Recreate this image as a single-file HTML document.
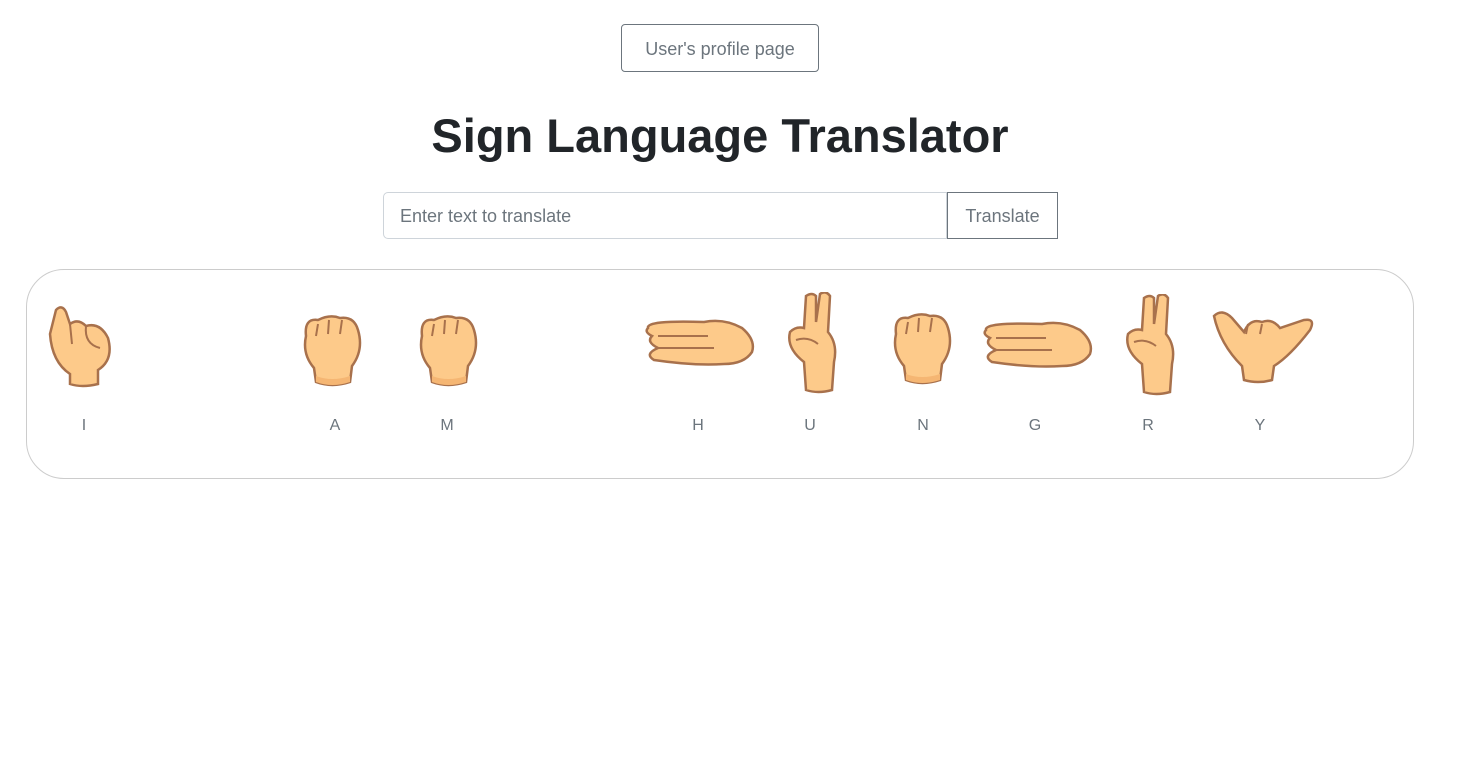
<!DOCTYPE html>
<html><head><meta charset="utf-8"><style>
body{margin:0;background:#fff;font-family:"Liberation Sans",sans-serif;width:1472px;height:778px;position:relative;overflow:hidden}
.btn{position:absolute;left:621px;top:24px;width:196px;height:46px;border:1px solid #6c757d;border-radius:4px;color:#6c757d;font-size:18px;line-height:48px;text-align:center}
h1{position:absolute;left:0;width:1440px;top:105px;margin:0;text-align:center;font-size:47px;font-weight:bold;color:#212529;line-height:62px}
.inp{position:absolute;left:383px;top:192px;width:564px;height:47px;border:1px solid #ced4da;border-radius:5px 0 0 5px;box-sizing:border-box;padding-left:16px;font-size:18px;line-height:47px;color:#6c757d}
.tb{position:absolute;left:947px;top:192px;width:111px;height:47px;border:1px solid #6c757d;box-sizing:border-box;font-size:18px;line-height:47px;text-align:center;color:#6c757d}
.box{position:absolute;left:26px;top:269px;width:1388px;height:210px;border:1px solid #ccc;border-radius:38px;box-sizing:border-box}
.l{position:absolute;top:417px;font-size:16px;color:#6c757d;width:40px;margin-left:-20px;text-align:center}
svg{position:absolute}
</style></head><body>
<div class="btn">User's profile page</div>
<h1>Sign Language Translator</h1>
<div class="inp">Enter text to translate</div>
<div class="tb">Translate</div>
<div class="box"></div>
<svg width="0" height="0"><defs>
<g id="fist"><path d="M10 30 Q8 12 22 14 Q34 8 44 12 Q58 10 62 24 Q68 44 56 60 L54 76 Q36 82 20 76 L18 62 Q6 48 10 30Z" fill="#fdca8a" stroke="#a8714c" stroke-width="2.5"/><path d="M20 30 L22 18 M32 28 L33 14 M44 28 L46 14" stroke="#a8714c" stroke-width="2" fill="none"/><path d="M20 70 Q36 76 54 70 L54 76 Q36 82 20 76Z" fill="#f5b673"/></g>
<g id="side"><path d="M4 10 Q2 2 60 4 Q80 0 98 10 Q112 22 108 34 Q100 46 80 46 Q50 48 10 42 Q0 36 14 30 Q2 24 8 18 Q0 14 4 10Z" fill="#fdca8a" stroke="#a8714c" stroke-width="2.5"/><path d="M14 18 L64 18 M14 30 L70 30" stroke="#a8714c" stroke-width="2" fill="none"/></g>
<g id="up"><path d="M26 70 Q8 56 12 40 Q18 34 26 36 L28 4 Q34 0 38 4 L38 30 L42 2 Q48 -2 52 4 L50 40 Q60 52 56 70 L54 98 Q40 102 28 98Z" fill="#fdca8a" stroke="#a8714c" stroke-width="2.5"/><path d="M18 48 Q30 44 40 52" stroke="#a8714c" stroke-width="2" fill="none"/></g>
</defs></svg>
<svg style="left:44px;top:304px" width="72" height="84"><path d="M12 6 Q18 0 22 8 L26 20 Q34 14 42 22 Q56 18 64 34 Q70 56 54 66 L54 80 Q38 84 26 80 L26 70 Q8 58 6 30Z" fill="#fdca8a" stroke="#a8714c" stroke-width="2.5"/><path d="M26 20 L28 40 M42 22 Q40 40 56 44" stroke="#a8714c" stroke-width="2" fill="none"/></svg>
<svg style="left:296px;top:306px" width="76" height="82"><use href="#fist"/></svg>
<svg style="left:412px;top:306px" width="72" height="82"><use href="#fist"/></svg>
<svg style="left:644px;top:318px" width="112" height="52"><use href="#side"/></svg>
<svg style="left:778px;top:292px" width="64" height="106"><use href="#up"/></svg>
<svg style="left:886px;top:304px" width="72" height="84"><use href="#fist"/></svg>
<svg style="left:982px;top:320px" width="112" height="52"><use href="#side"/></svg>
<svg style="left:1116px;top:294px" width="64" height="102"><use href="#up"/></svg>
<svg style="left:1210px;top:304px" width="104" height="80"><path d="M4 12 Q12 4 22 14 L34 28 Q40 14 52 18 Q62 14 70 24 L94 16 Q106 14 100 26 Q80 52 64 62 L62 76 Q48 80 34 76 L32 62 Q10 40 4 12Z" fill="#fdca8a" stroke="#a8714c" stroke-width="2.5"/><path d="M36 30 L38 20 M50 30 L52 20" stroke="#a8714c" stroke-width="2" fill="none"/></svg>
<div class="l" style="left:84px">I</div>
<div class="l" style="left:335px">A</div>
<div class="l" style="left:447px">M</div>
<div class="l" style="left:698px">H</div>
<div class="l" style="left:810px">U</div>
<div class="l" style="left:923px">N</div>
<div class="l" style="left:1035px">G</div>
<div class="l" style="left:1148px">R</div>
<div class="l" style="left:1260px">Y</div>
</body></html>
